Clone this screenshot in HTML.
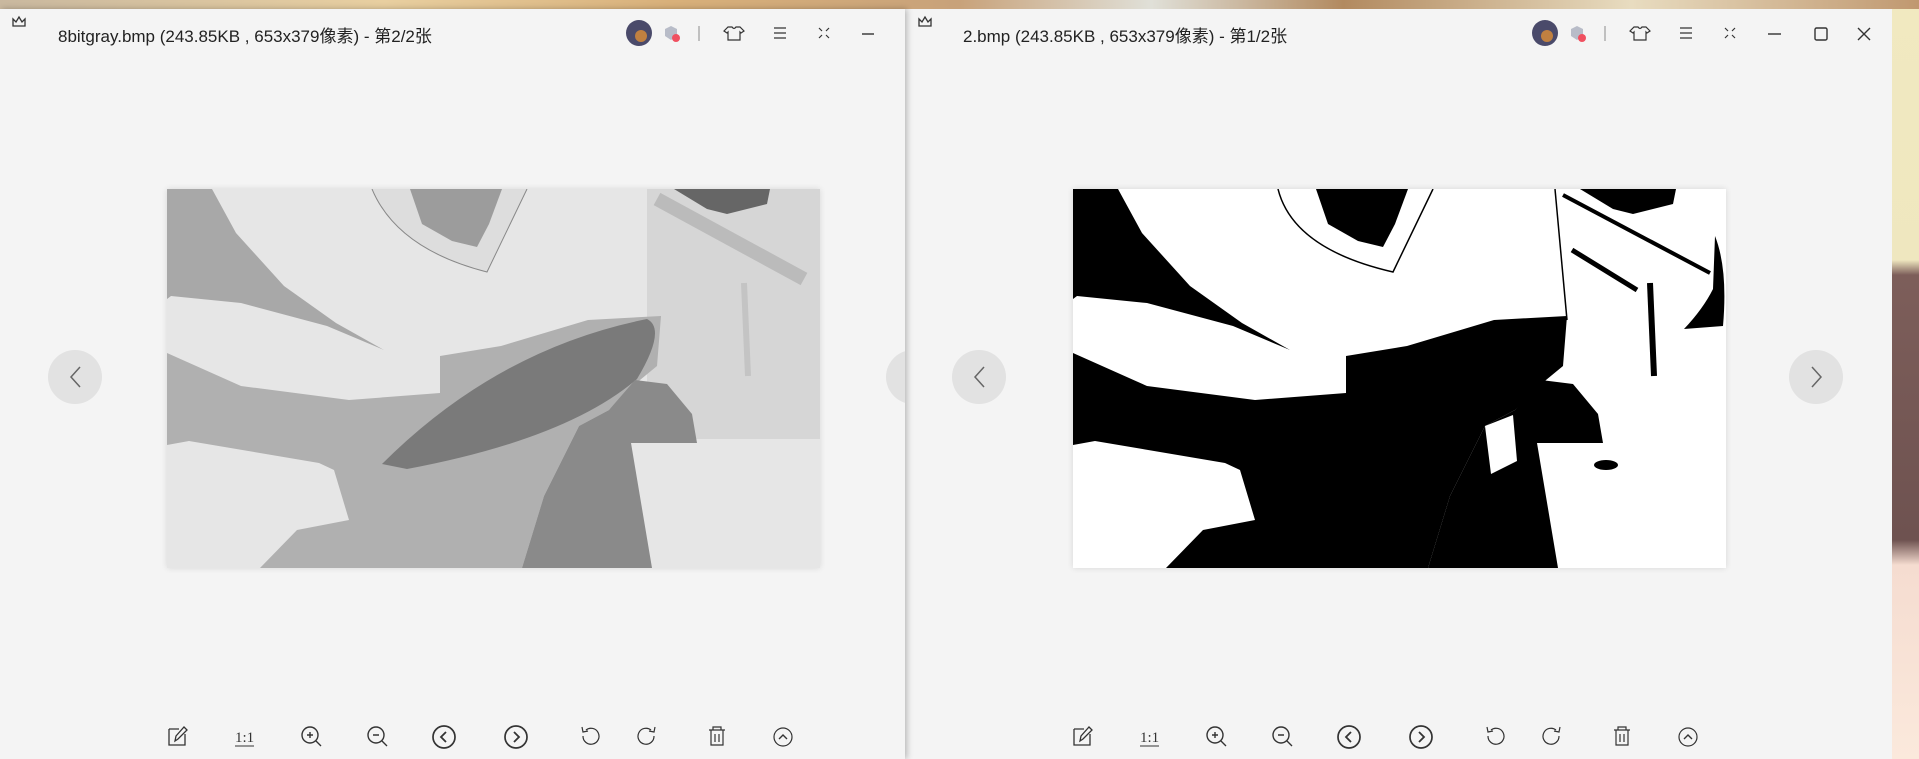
<!DOCTYPE html>
<html><head><meta charset="utf-8">
<style>
*{margin:0;padding:0;box-sizing:border-box}
body{width:1919px;height:759px;overflow:hidden;position:relative;font-family:"Liberation Sans","Noto Sans CJK SC",sans-serif;
background:linear-gradient(180deg,#f1e9c0 0px,#efe7bf 260px,#7d5e5a 275px,#6e5250 540px,#f5dcd0 565px,#fbe9dc 759px);}
.wall{position:absolute;left:0;top:0;width:1919px;height:9px;background:linear-gradient(90deg,#c9b89f,#e8cfa0 20%,#d8b07a 35%,#c8a27a 50%,#e0e0d8 60%,#b28a60 70%,#e8dcc0 85%,#c09870)}
.win{position:absolute;top:9px;height:750px;background:#f4f4f4}
.title{position:absolute;top:22px;font-size:17px;color:#222;white-space:nowrap}
.img{position:absolute;top:189px;width:653px;height:379px;box-shadow:0 0 6px rgba(0,0,0,.12)}
.nav{position:absolute;width:54px;height:54px;border-radius:50%;background:#e2e2e2}
</style></head><body>
<div class="wall"></div>
<div class="win" style="left:0;width:905px;box-shadow:2px 0 6px rgba(0,0,0,.25);z-index:2"></div>
<div class="win" style="left:905px;width:987px;z-index:1"></div>

<svg width="1919" height="759" style="position:absolute;left:0;top:0;z-index:3" fill="none" stroke="#333" stroke-width="1.4">
<defs>
<symbol id="logo" viewBox="0 0 16 14"><path d="M2 12 L2 5 L5 8 L8 3 L11 8 L14 5 L14 12 Z" stroke="#333" fill="none" stroke-width="1.3"/></symbol>
<symbol id="hdr" viewBox="-20 0 300 30" overflow="visible">
<circle cx="10" cy="15" r="13" fill="#4a4a6a" stroke="none"/><circle cx="12" cy="18" r="6" fill="#c08040" stroke="none"/>
<path d="M42 8 L48 11 L48 18 L42 22 L36 18 L36 11 Z" fill="#b8bcc8" stroke="none"/><circle cx="47" cy="20" r="4" fill="#f05060" stroke="none"/>
<line x1="70" y1="8" x2="70" y2="23" stroke="#aaa"/>
<path d="M99 9 L103 9 Q105 12 107 9 L111 9 L115 13 L112 15 L111 14 L111 22 L99 22 L99 14 L98 15 L95 13 Z" stroke-width="1.2"/>
<path d="M145 10h12M145 15h12M145 20h12" stroke-width="1.2"/>
<path d="M190 10l3 3M200 10l-3 3M190 20l3-3M200 20l-3-3" stroke-width="1.2"/>
</symbol>
</defs>
<use href="#logo" x="11" y="14" width="16" height="14"/>
<use href="#logo" x="917" y="14" width="16" height="14"/>
<use href="#hdr" x="609" y="18" width="300" height="30"/>
<use href="#hdr" x="1515" y="18" width="300" height="30"/>
<path d="M862 34h12" stroke="#333"/>
<path d="M1768 34h13" stroke="#333"/>
<rect x="1815" y="28" width="12" height="12" rx="1.5" stroke="#333"/>
<path d="M1858 28l12 12M1870 28l-12 12" stroke="#333"/>
</svg>

<div class="title" style="left:58px;z-index:4">8bitgray.bmp (243.85KB , 653x379像素) - 第2/2张</div>
<div class="title" style="left:963px;z-index:4">2.bmp (243.85KB , 653x379像素) - 第1/2张</div>

<svg class="img" style="left:167px;z-index:4" viewBox="0 0 653 379" preserveAspectRatio="none">
<rect width="653" height="379" fill="#e6e6e6"/>
<rect x="480" y="0" width="173" height="250" fill="#d6d6d6"/>
<path d="M0 0 L45 0 L69 44 L117 97 L169 134 L217 161 L160 137 L74 114 L4 107 L0 110Z" fill="#a8a8a8"/>
<path d="M0 164 L74 197 L182 211 L273 204 L273 167 L334 157 L421 131 L494 127 L490 177 L473 191 L442 221 L412 237 L377 307 L355 379 L93 379 L130 341 L182 331 L167 281 L152 274 L22 252 L0 256Z" fill="#b0b0b0"/>
<path d="M215 275 Q330 160 480 130 Q500 140 470 190 Q400 250 240 280Z" fill="#7a7a7a"/>
<path d="M442 221 L468 191 L500 195 L525 225 L530 254 L464 254 L485 379 L355 379 L377 307 L412 237Z" fill="#8a8a8a"/>
<path d="M243 0 L335 0 L322 35 L310 58 L285 52 L255 35Z" fill="#7a7a7a"/>
<path d="M205 0 Q230 60 320 83 L360 0" stroke="#888" fill="#d0d0d0" fill-opacity=".4"/>
<path d="M507 0 L603 0 L600 15 L560 25 L540 20Z" fill="#666"/>
<path d="M490 10 L637 90" stroke="#bbb" stroke-width="14"/>
<path d="M577 94 L581 187" stroke="#c4c4c4" stroke-width="6"/>
</svg>

<svg class="img" style="left:1073px;z-index:4" viewBox="0 0 653 379" preserveAspectRatio="none">
<rect width="653" height="379" fill="#fff"/>
<path d="M0 0 L45 0 L69 44 L117 97 L169 134 L217 161 L160 137 L74 114 L4 107 L0 110Z" fill="#000"/>
<path d="M0 164 L74 197 L182 211 L273 204 L273 167 L334 157 L421 131 L494 127 L490 177 L473 191 L442 221 L412 237 L377 307 L355 379 L93 379 L130 341 L182 331 L167 281 L152 274 L22 252 L0 256Z" fill="#000"/>
<path d="M442 221 L468 191 L500 195 L525 225 L530 254 L464 254 L485 379 L355 379 L377 307 L412 237Z" fill="#000"/>
<path d="M412 237 L440 226 L444 272 L418 285Z" fill="#fff"/>
<path d="M243 0 L335 0 L322 35 L310 58 L285 52 L255 35Z" fill="#000"/>
<path d="M205 0 Q220 60 320 83 L360 0" stroke="#000" stroke-width="1.5" fill="none"/>
<path d="M482 0 L494 131" stroke="#000" stroke-width="1.5"/>
<path d="M507 0 L603 0 L600 15 L560 25 L540 20Z" fill="#000"/>
<path d="M490 6 L637 84" stroke="#000" stroke-width="4"/>
<path d="M499 61 L564 101" stroke="#000" stroke-width="5"/>
<path d="M577 94 L581 187" stroke="#000" stroke-width="6"/>
<path d="M642 47 Q655 80 650 137 L611 140 Q630 120 640 100Z" fill="#000"/>
<ellipse cx="533" cy="276" rx="12" ry="5" fill="#000"/>
</svg>

<div class="nav" style="left:48px;top:350px;z-index:5"></div>
<div style="position:absolute;left:886px;top:350px;width:19px;height:54px;overflow:hidden;z-index:5"><div class="nav" style="left:0;top:0"></div></div>
<div class="nav" style="left:952px;top:350px;z-index:5"></div>
<div class="nav" style="left:1789px;top:350px;z-index:5"></div>
<svg width="1919" height="759" style="position:absolute;left:0;top:0;z-index:6" fill="none" stroke="#666" stroke-width="1.5">
<path d="M80 367l-9 10 9 10"/><path d="M984 367l-9 10 9 10"/><path d="M1812 367l9 10-9 10"/>
</svg>

<svg width="1919" height="759" style="position:absolute;left:0;top:0;z-index:6" fill="none" stroke="#333" stroke-width="1.4">
<defs>
<symbol id="bar" viewBox="0 0 640 30" overflow="visible">
<path d="M2 7 L2 23 L18 23 L18 12 M2 7 L12 7 M8 19 L9 14 L17 5 L20 8 L11 17 Z" stroke-width="1.3"/>
<text x="68" y="20" font-family="Liberation Serif,serif" font-size="15" fill="#333" stroke="none">1:1</text><path d="M68 24h19" stroke-width="1"/>
<circle cx="143" cy="13" r="8"/><path d="M149 19l5 5M140 13h6M143 10v6"/>
<circle cx="209" cy="13" r="8"/><path d="M215 19l5 5M206 13h6"/>
<circle cx="277" cy="15" r="11" stroke-width="1.7"/><path d="M279 10l-5 5 5 5" stroke-width="1.8"/>
<circle cx="349" cy="15" r="11" stroke-width="1.7"/><path d="M347 10l5 5-5 5" stroke-width="1.8"/>
<path d="M419 8 A8 8 0 1 1 416 14 M415 5 L416 10 L421 9" stroke-width="1.2"/>
<path d="M484 8 A8 8 0 1 0 487 14 M488 5 L487 10 L482 9" stroke-width="1.2"/>
<path d="M542 8h16M546 8v-3h8v3M544 8v15h12v-15M548 12v8M552 12v8" stroke-width="1.2"/>
<circle cx="616" cy="15" r="9" stroke-width="1.2"/><path d="M612 17l4-4 4 4"/>
</symbol>
</defs>
<use href="#bar" x="167" y="722" width="640" height="30"/>
<use href="#bar" x="1072" y="722" width="640" height="30"/>
</svg>
</body></html>
